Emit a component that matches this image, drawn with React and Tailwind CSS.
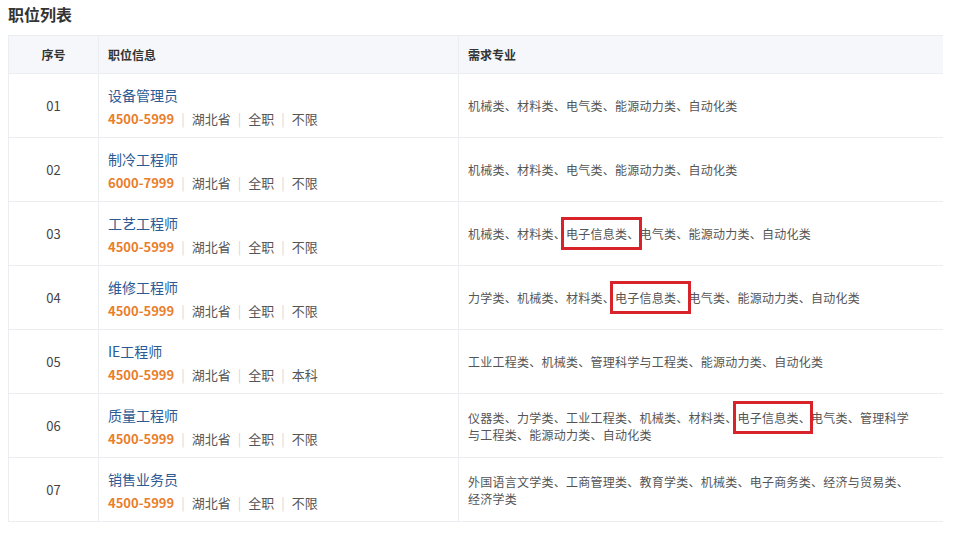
import React from "react";

const jobs = [
  { no: "01", title: "设备管理员", pay: "4500-5999", edu: "不限", majors: ["机械类、材料类、电气类、能源动力类、自动化类"] },
  { no: "02", title: "制冷工程师", pay: "6000-7999", edu: "不限", majors: ["机械类、材料类、电气类、能源动力类、自动化类"] },
  { no: "03", title: "工艺工程师", pay: "4500-5999", edu: "不限", majors: ["机械类、材料类、", "电子信息类、", "电气类、能源动力类、自动化类"] },
  { no: "04", title: "维修工程师", pay: "4500-5999", edu: "不限", majors: ["力学类、机械类、材料类、", "电子信息类、", "电气类、能源动力类、自动化类"] },
  { no: "05", title: "IE工程师", pay: "4500-5999", edu: "本科", majors: ["工业工程类、机械类、管理科学与工程类、能源动力类、自动化类"] },
  { no: "06", title: "质量工程师", pay: "4500-5999", edu: "不限", majors: ["仪器类、力学类、工业工程类、机械类、材料类、", "电子信息类、", "电气类、管理科学与工程类、能源动力类、自动化类"] },
  { no: "07", title: "销售业务员", pay: "4500-5999", edu: "不限", majors: ["外国语言文学类、工商管理类、教育学类、机械类、电子商务类、经济与贸易类、经济学类"] },
];

const Sep = () => <span className="mx-[7px] text-[#d6d6d6]">|</span>;

const App = () => {
  return (
    <div className="w-[980px] h-[560px] bg-white font-['Noto_Sans_CJK_SC',sans-serif] text-[#333]">
      <div className="pl-[8px] pt-[2px] text-[16px] font-bold leading-[24px] text-[#333]">职位列表</div>
      <div className="ml-[8px] mt-[9px] w-[935px] border-l border-[#ebedf0]">
        <div className="flex h-[39px] bg-[#f5f7fa] border-y border-[#ebedf0] text-[12px] font-bold text-[#333]">
          <div className="w-[90px] flex items-center justify-center border-r border-[#ebedf0]">序号</div>
          <div className="w-[360px] flex items-center pl-[9px] border-r border-[#ebedf0]">职位信息</div>
          <div className="flex-1 flex items-center pl-[9px]">需求专业</div>
        </div>
        {jobs.map((j) => (
          <div key={j.no} className="flex h-[64px] border-b border-[#ebedf0]">
            <div className="w-[90px] flex items-center justify-center border-r border-[#ebedf0] text-[13px] text-[#444]">{j.no}</div>
            <div className="w-[360px] flex flex-col justify-center pl-[9px] pt-[2px] border-r border-[#ebedf0] gap-[4px]">
              <div className="text-[14px] leading-[20px] text-[#2b5a94]">{j.title}</div>
              <div className="flex items-center text-[13px] leading-[20px] text-[#555]">
                <span className="font-bold text-[#ea7e2c]">{j.pay}</span>
                <Sep />
                <span>湖北省</span>
                <Sep />
                <span>全职</span>
                <Sep />
                <span>{j.edu}</span>
              </div>
            </div>
            <div className="flex-1 flex items-center pl-[9px] pr-[30px]">
              <p className="text-[12px] leading-[17px] tracking-[0.25px] text-[#555]">
                {j.majors.map((m, i) =>
                  m === "电子信息类、" ? (
                    <span key={i} className="relative">
                      {m}
                      <span className="absolute left-[-5px] right-[-2px] top-[-8px] bottom-[-8px] border-[3px] border-[#d7242b]" />
                    </span>
                  ) : (
                    <span key={i}>{m}</span>
                  )
                )}
              </p>
            </div>
          </div>
        ))}
      </div>
    </div>
  );
};

export default App;
